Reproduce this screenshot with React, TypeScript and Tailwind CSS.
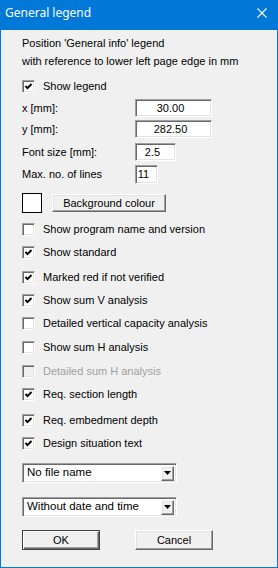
import React from 'react';

const sunken =
  'border border-t-[#a0a0a0] border-l-[#a0a0a0] border-b-white border-r-white shadow-[inset_1px_1px_0_#696969,inset_-1px_-1px_0_#e3e3e3]';
const raised =
  'border border-t-white border-l-white border-b-[#696969] border-r-[#696969] shadow-[inset_-1px_-1px_0_#a0a0a0,inset_1px_1px_0_#e3e3e3] bg-[#f0f0f0]';

function CheckBox({ checked = false, disabled = false }: { checked?: boolean; disabled?: boolean }) {
  return (
    <span
      className={`relative block w-[13px] h-[13px] shrink-0 ${sunken} ${disabled ? 'bg-[#f0f0f0]' : 'bg-white'}`}
    >
      {checked && (
        <svg width="13" height="13" viewBox="0 0 13 13" className="absolute left-[-1px] top-[-1px]">
          <polyline points="3.5,6 5.5,8.2 9.5,4" fill="none" stroke="#000" strokeWidth="1.9" />
        </svg>
      )}
    </span>
  );
}

const checks = [
  { label: 'Show program name and version', checked: false, mt: 'mt-[7px]' },
  { label: 'Show standard', checked: true, mt: 'mt-[5px]' },
  { label: 'Marked red if not verified', checked: true, mt: 'mt-[7px]' },
  { label: 'Show sum V analysis', checked: true, mt: 'mt-[5px]' },
  { label: 'Detailed vertical capacity analysis', checked: false, mt: 'mt-[5px]' },
  { label: 'Show sum H analysis', checked: false, mt: 'mt-[6px]' },
  { label: 'Detailed sum H analysis', checked: false, mt: 'mt-[6px]', disabled: true },
  { label: 'Req. section length', checked: true, mt: 'mt-[5px]' },
  { label: 'Req. embedment depth', checked: true, mt: 'mt-[8px]' },
  { label: 'Design situation text', checked: true, mt: 'mt-[5px]' },
];

function CheckRow({ label, checked, disabled, className = '' }: { label: string; checked: boolean; disabled?: boolean; className?: string }) {
  return (
    <div className={`flex items-center h-[18px] ${className}`}>
      <CheckBox checked={checked} disabled={disabled} />
      <span className={`ml-[8px] ${disabled ? 'text-[#a0a0a0]' : ''}`}>{label}</span>
    </div>
  );
}

function Select({ value, className = '' }: { value: string; className?: string }) {
  return (
    <div className={`flex items-center w-[155px] h-[20px] bg-white ${sunken} ${className}`}>
      <span className="flex-1 pl-[4px] text-[11.5px]">{value}</span>
      <span className={`flex items-center justify-center w-[13px] h-[15px] mr-[2px] ${raised}`}>
        <svg width="7" height="4" viewBox="0 0 7 4">
          <polygon points="0,0 7,0 3.5,4" fill="#000" />
        </svg>
      </span>
    </div>
  );
}

export default function App() {
  return (
    <div className="w-[278px] h-[568px] bg-[#0078d7] flex flex-col font-['Liberation_Sans',Arial,sans-serif] text-[11px] text-black">
      {/* title bar */}
      <div className="h-[30px] flex items-start shrink-0">
        <span className="pl-[5px] pt-[5px] leading-[16px] text-[12px] text-white font-['Noto_Sans',sans-serif]">
          General legend
        </span>
        <svg width="10" height="10" viewBox="0 0 10 10" className="ml-auto mr-[11px] mt-[8px]">
          <path d="M0.5 0.5 L9.5 9.5 M9.5 0.5 L0.5 9.5" stroke="#fff" strokeWidth="1.1" />
        </svg>
      </div>

      {/* body */}
      <div className="flex-1 mx-[1px] mb-[1px] bg-[#f0f0f0] pl-[21px] pt-[4px] flex flex-col">
        <div className="leading-[18px]">
          <div>Position 'General info' legend</div>
          <div>with reference to lower left page edge in mm</div>
        </div>

        <CheckRow label="Show legend" checked className="mt-[7px]" />

        <div className="flex items-center h-[18px] mt-[4px]">
          <span className="w-[113px]">x [mm]:</span>
          <div className={`w-[77px] h-[18px] bg-white flex items-center justify-center pr-[6px] ${sunken}`}>30.00</div>
        </div>
        <div className="flex items-center h-[18px] mt-[3px]">
          <span className="w-[113px]">y [mm]:</span>
          <div className={`w-[77px] h-[18px] bg-white flex items-center justify-center pr-[6px] ${sunken}`}>282.50</div>
        </div>
        <div className="flex items-center h-[18px] mt-[5px]">
          <span className="w-[113px]">Font size [mm]:</span>
          <div className={`w-[41px] h-[18px] bg-white flex items-center justify-center pr-[6px] ${sunken}`}>2.5</div>
        </div>
        <div className="flex items-center h-[19px] mt-[4px]">
          <span className="w-[113px]">Max. no. of lines</span>
          <div className={`w-[23px] h-[19px] bg-white flex items-center justify-center pr-[6px] ${sunken}`}>11</div>
        </div>

        <div className="flex items-center h-[20px] mt-[9px]">
          <div className="w-[20px] h-[20px] bg-white border border-black" />
          <button className={`ml-[10px] w-[114px] h-[18px] flex items-center justify-center ${raised}`}>
            Background colour
          </button>
        </div>

        {checks.map((c) => (
          <CheckRow key={c.label} label={c.label} checked={c.checked} disabled={c.disabled} className={c.mt} />
        ))}

        <Select value="No file name" className="mt-[11px]" />
        <Select value="Without date and time" className="mt-[14px]" />

        <div className="flex mt-[13px]">
          <button className="w-[78px] h-[20px] flex items-center justify-center bg-[#f0f0f0] border border-[#404040] shadow-[inset_1px_1px_0_#fff,inset_-1px_-1px_0_#696969,inset_-2px_-2px_0_#a0a0a0]">
            OK
          </button>
          <button className={`ml-[35px] w-[78px] h-[20px] flex items-center justify-center ${raised}`}>Cancel</button>
        </div>
      </div>
    </div>
  );
}
